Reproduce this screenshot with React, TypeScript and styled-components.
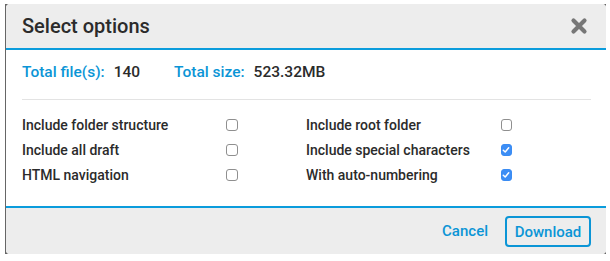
import styled, { createGlobalStyle } from "styled-components";

const Global = createGlobalStyle`
  html, body {
    margin: 0;
    padding: 0;
    background: #fff;
    font-family: Roboto, "Liberation Sans", Arial, sans-serif;
  }
`;

const Backdrop = styled.div`
  margin: 4px 0 0 5px;
  width: 601px;
  height: 250px;
  background: #666;
  display: flex;
`;

const Dialog = styled.div`
  flex: 1;
  margin-left: 1px;
  background: #fff;
  border-radius: 4px;
  overflow: hidden;
  display: flex;
  flex-direction: column;
`;

const Header = styled.div`
  height: 44px;
  background: #ededed;
  border-bottom: 2px solid #0b9cdc;
  display: flex;
  align-items: center;
  justify-content: space-between;
  padding: 0 18px 0 16px;
`;

const Title = styled.h2`
  margin: 0;
  font-size: 20px;
  font-weight: 500;
  color: #2b2b2b;
`;

const Close = styled.button`
  border: 0;
  background: none;
  padding: 0;
  width: 18px;
  height: 18px;
  display: flex;
  cursor: pointer;
`;

const Body = styled.div`
  flex: 1;
  padding: 0 15px 0 16px;
`;

const Totals = styled.div`
  display: flex;
  gap: 34px;
  padding: 13px 0 18px;
  line-height: 18px;
  font-size: 15.5px;
  font-weight: 500;
  border-bottom: 1px solid #e3e3e3;
`;

const Stat = styled.div`
  display: flex;
  gap: 9px;
`;

const StatLabel = styled.span`
  color: #0b95d6;
`;

const StatValue = styled.span`
  color: #2b2b2b;
`;

const Options = styled.div`
  display: grid;
  grid-template-columns: 284px 206px;
  margin-top: 12px;
`;

const Option = styled.label`
  display: flex;
  align-items: center;
  height: 25px;
  font-size: 14px;
  font-weight: 500;
  color: #2b2b2b;
`;

const OptionText = styled.span<{ $w: number }>`
  width: ${(p) => p.$w}px;
`;

const Box = styled.span<{ $on: boolean }>`
  width: 12px;
  height: 12px;
  box-sizing: border-box;
  border-radius: 3px;
  border: 1px solid ${(p) => (p.$on ? "#3a8cf3" : "#8f8f8f")};
  background: ${(p) => (p.$on ? "#3d8ef5" : "#fff")};
  display: flex;
  align-items: center;
  justify-content: center;
  margin-top: 1px;
`;

const Footer = styled.div`
  height: 46px;
  background: #ededed;
  border-top: 2px solid #0b9cdc;
  display: flex;
  align-items: center;
  justify-content: flex-end;
  gap: 17px;
  padding-right: 15px;
`;

const TextButton = styled.button`
  border: 0;
  background: none;
  padding: 0;
  font: inherit;
  font-size: 15px;
  font-weight: 500;
  color: #0b95d6;
  cursor: pointer;
`;

const OutlineButton = styled(TextButton)`
  width: 86px;
  height: 31px;
  border: 2px solid #0b95d6;
  border-radius: 4px;
  margin-top: 1px;
`;

const Check = () => (
  <svg width="8" height="8" viewBox="0 0 8 8">
    <path d="M1.3 4.2 L3.2 6 L6.7 1.8" fill="none" stroke="#fff" strokeWidth="1.5" strokeLinecap="round" strokeLinejoin="round" />
  </svg>
);

const options = [
  { label: "Include folder structure", on: false },
  { label: "Include root folder", on: false },
  { label: "Include all draft", on: false },
  { label: "Include special characters", on: true },
  { label: "HTML navigation", on: false },
  { label: "With auto-numbering", on: true },
];

export default function App() {
  return (
    <>
      <Global />
      <Backdrop>
        <Dialog>
          <Header>
            <Title>Select options</Title>
            <Close aria-label="Close">
              <svg width="18" height="18" viewBox="0 0 18 18">
                <path d="M3.5 3.5 L14.5 14.5 M14.5 3.5 L3.5 14.5" stroke="#777" strokeWidth="4.2" strokeLinecap="round" />
              </svg>
            </Close>
          </Header>
          <Body>
            <Totals>
              <Stat>
                <StatLabel>Total file(s):</StatLabel>
                <StatValue>140</StatValue>
              </Stat>
              <Stat>
                <StatLabel>Total size:</StatLabel>
                <StatValue>523.32MB</StatValue>
              </Stat>
            </Totals>
            <Options>
              {options.map((o, i) => (
                <Option key={o.label}>
                  <OptionText $w={i % 2 === 0 ? 204 : 206}>{o.label}</OptionText>
                  <Box $on={o.on}>{o.on && <Check />}</Box>
                </Option>
              ))}
            </Options>
          </Body>
          <Footer>
            <TextButton>Cancel</TextButton>
            <OutlineButton>Download</OutlineButton>
          </Footer>
        </Dialog>
      </Backdrop>
    </>
  );
}
